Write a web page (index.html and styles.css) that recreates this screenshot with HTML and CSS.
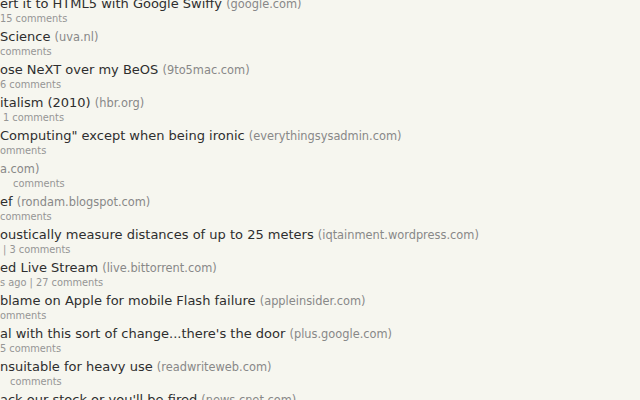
FILE: index.html
```
<!DOCTYPE html>
<html lang="en">
<head>
    <meta charset="UTF-8">
    <title>News</title>
    <link rel="stylesheet" href="styles.css">
</head>
<body>
    <div class="stories">
        <div class="item">
            <div class="title">ert it to HTML5 with Google Swiffy <span class="site">(google.com)</span></div>
            <div class="sub">15 comments</div>
        </div>
        <div class="item">
            <div class="title">Science <span class="site">(uva.nl)</span></div>
            <div class="sub">comments</div>
        </div>
        <div class="item">
            <div class="title">ose NeXT over my BeOS <span class="site">(9to5mac.com)</span></div>
            <div class="sub">6 comments</div>
        </div>
        <div class="item">
            <div class="title">italism (2010) <span class="site">(hbr.org)</span></div>
            <div class="sub in-3">1 comments</div>
        </div>
        <div class="item">
            <div class="title">Computing" except when being ironic <span class="site">(everythingsysadmin.com)</span></div>
            <div class="sub">omments</div>
        </div>
        <div class="item">
            <div class="title"><span class="site">a.com)</span></div>
            <div class="sub in-13">comments</div>
        </div>
        <div class="item">
            <div class="title">ef <span class="site">(rondam.blogspot.com)</span></div>
            <div class="sub">comments</div>
        </div>
        <div class="item">
            <div class="title">oustically measure distances of up to 25 meters <span class="site">(iqtainment.wordpress.com)</span></div>
            <div class="sub in-3">| 3 comments</div>
        </div>
        <div class="item">
            <div class="title">ed Live Stream <span class="site">(live.bittorrent.com)</span></div>
            <div class="sub">s ago | 27 comments</div>
        </div>
        <div class="item">
            <div class="title">blame on Apple for mobile Flash failure <span class="site">(appleinsider.com)</span></div>
            <div class="sub">omments</div>
        </div>
        <div class="item">
            <div class="title">al with this sort of change...there's the door <span class="site">(plus.google.com)</span></div>
            <div class="sub">5 comments</div>
        </div>
        <div class="item">
            <div class="title">nsuitable for heavy use <span class="site">(readwriteweb.com)</span></div>
            <div class="sub in-10">comments</div>
        </div>
        <div class="item">
            <div class="title">ack our stock or you'll be fired <span class="site">(news.cnet.com)</span></div>
        </div>
    </div>
</body>
</html>
```

FILE: styles.css
```
body {
    margin: 0;
    background-color: #f6f6ef;
    font-family: "DejaVu Sans", Verdana, sans-serif;
    overflow: hidden;
}

.stories {
    margin-top: -5px;
}

.item {
    height: 33px;
}

.title {
    font-size: 13px;
    line-height: 18px;
    color: #2e2e2e;
    white-space: nowrap;
}

.site {
    font-size: 11.4px;
    color: #888888;
}

.sub {
    font-size: 9.8px;
    line-height: 11px;
    color: #959595;
    white-space: nowrap;
}

.in-3 {
    padding-left: 3px;
}

.in-10 {
    padding-left: 10px;
}

.in-13 {
    padding-left: 13px;
}
```
